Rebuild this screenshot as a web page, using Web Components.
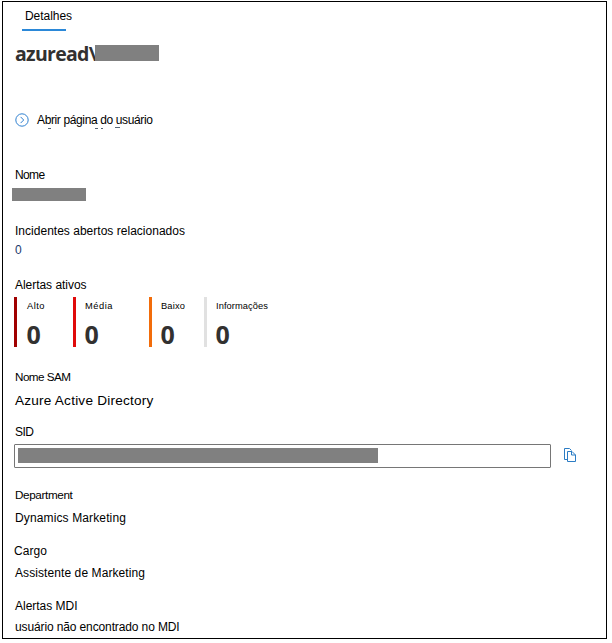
<!DOCTYPE html>
<html lang="pt-BR">
<head>
<meta charset="utf-8">
<title>Detalhes</title>
<style>
html,body{margin:0;background:#fff}
body{font-family:"Liberation Sans",Arial,sans-serif;color:#000}
</style>
</head>
<body>
<user-panel></user-panel>
<script>
// One line of text; "w" is the advance width the line is tracked to.
class TextLine extends HTMLElement{
  connectedCallback(){
    const size=this.getAttribute('size'), w=+this.getAttribute('w');
    const root=this.attachShadow({mode:'open'});
    root.innerHTML=`<style>:host{display:block;height:16px;line-height:16px;font-size:${size||12}px;white-space:pre}span{display:inline-block}</style><span><slot></slot></span>`;
    const s=root.querySelector('span'), n=this.textContent.length;
    if(w) s.style.letterSpacing=((w-s.getBoundingClientRect().width)/n).toFixed(3)+'px';
  }
}
customElements.define('text-line',TextLine);

class RedactedBar extends HTMLElement{
  connectedCallback(){
    this.attachShadow({mode:'open'}).innerHTML=`<style>:host{display:block;flex:none;background:#808080;width:${this.getAttribute('w')}px;height:${this.getAttribute('h')}px}</style>`;
  }
}
customElements.define('redacted-bar',RedactedBar);

class AlertCount extends HTMLElement{
  connectedCallback(){
    this.attachShadow({mode:'open'}).innerHTML=`<style>
:host{display:block;box-sizing:border-box;height:50px;border-left:3px solid ${this.getAttribute('color')};padding:1px 0 0 ${this.getAttribute('pad')||10}px}
b{display:block;margin-top:3px;font:bold 25px/34px "Noto Sans","Open Sans",sans-serif;color:#323130;margin-left:-.5px}
</style><text-line size="9.3" w="${this.getAttribute('w')}">${this.getAttribute('label')}</text-line><b><slot></slot></b>`;
  }
}
customElements.define('alert-count',AlertCount);

class PageLink extends HTMLElement{
  connectedCallback(){
    this.attachShadow({mode:'open'}).innerHTML=`<style>
:host{display:flex;gap:8px;height:16px}
svg{display:block;margin-top:1px}
</style><svg width="14" height="14" viewBox="0 0 14 14" fill="none" stroke="#2f80d0"><circle cx="7" cy="7" r="6.2"/><path d="M5.600 3.900 8.700 7 5.600 10.100"/></svg><slot></slot>`;
  }
}
customElements.define('page-link',PageLink);

class CopyField extends HTMLElement{
  connectedCallback(){
    this.attachShadow({mode:'open'}).innerHTML=`<style>
:host{display:flex;align-items:center;gap:12px;height:24px}
div{box-sizing:border-box;width:537px;height:24px;border:1px solid #767676;border-radius:1px;padding:3px}
svg{display:block;margin-top:-3px}
</style><div><slot></slot></div><svg width="14" height="16" viewBox="0 0 14 16" fill="none" stroke="#2b7cc4"><path d="M4.500 12.500h-3v-11h5l2 2"/><path d="M4.500 4.500h4.500l3.500 3.500v6.500H4.500zM8.500 4.500v3.500h4"/></svg>`;
  }
}
customElements.define('copy-field',CopyField);

class UserPanel extends HTMLElement{
  connectedCallback(){
    this.attachShadow({mode:'open'}).innerHTML=`<style>
:host{display:flex;flex-direction:column;box-sizing:border-box;width:605px;height:638px;margin:1px 0 0 2px;border:1px solid #000;padding:6px 0 0 12px;overflow:hidden}
.tab{width:44px;height:21px;border-bottom:2px solid #2b88d8;margin-left:7px}
.tab text-line{margin-left:3px}
h1{display:flex;margin:7px 0 0;height:32px;font:bold 19.5px/32px "Open Sans","Noto Sans",sans-serif;color:#323130}
h1 span{width:80px;white-space:pre;letter-spacing:-.7px}
h1 redacted-bar{margin-top:7px}
.row{display:flex}
.clip{display:block;height:2px;margin:-1px 0 -1px 22px}
</style>
<div class="tab"><text-line w="47">Detalhes</text-line></div>
<h1><span>azuread\\</span><redacted-bar w="64" h="16"></redacted-bar></h1>
<page-link style="margin-top:42px"><text-line w="115.500">Abrir página do usuário</text-line></page-link>
<svg class="clip" width="100" height="2" fill="#567"><path d="M11 1h3v1h-3zM58 1h3v1h-3zM64 1h2v1h-2zM78 0h5v1h-5z"/></svg>
<text-line w="29.500" style="margin-top:39px">Nome</text-line>
<redacted-bar w="74" h="13" style="margin:5px 0 0 -3px"></redacted-bar>
<text-line w="170" style="margin-top:22px">Incidentes abertos relacionados</text-line>
<text-line style="margin-top:3px;color:#1b3a6b">0</text-line>
<text-line w="71.500" style="margin-top:19px">Alertas ativos</text-line>
<div class="row" style="margin:4px 0 0 -1px">
<alert-count color="#a00000" label="Alto" w="18" style="width:59px">0</alert-count>
<alert-count color="#e00b0b" label="Média" w="28" pad="9" style="width:76px">0</alert-count>
<alert-count color="#f26c0a" label="Baixo" w="24" pad="9" style="width:55px">0</alert-count>
<alert-count color="#e1e1e1" label="Informações" w="52" pad="9">0</alert-count>
</div>
<text-line w="55.500" size="11.7" style="margin-top:22px">Nome SAM</text-line>
<text-line size="13.6" w="138.500" style="margin-top:8px">Azure Active Directory</text-line>
<text-line w="18.500" style="margin-top:15px">SID</text-line>
<copy-field style="margin:4px 0 0 -1px"><redacted-bar w="360" h="15"></redacted-bar></copy-field>
<text-line w="57.500" size="11.7" style="margin-top:19px">Department</text-line>
<text-line w="111" style="margin-top:7px">Dynamics Marketing</text-line>
<text-line w="33" style="margin:17px 0 0 -1px">Cargo</text-line>
<text-line w="130" style="margin-top:6px">Assistente de Marketing</text-line>
<text-line w="62.500" style="margin-top:17px">Alertas MDI</text-line>
<text-line w="164.500" style="margin-top:5px">usuário não encontrado no MDI</text-line>`;
  }
}
customElements.define('user-panel',UserPanel);
</script>
</body>
</html>
